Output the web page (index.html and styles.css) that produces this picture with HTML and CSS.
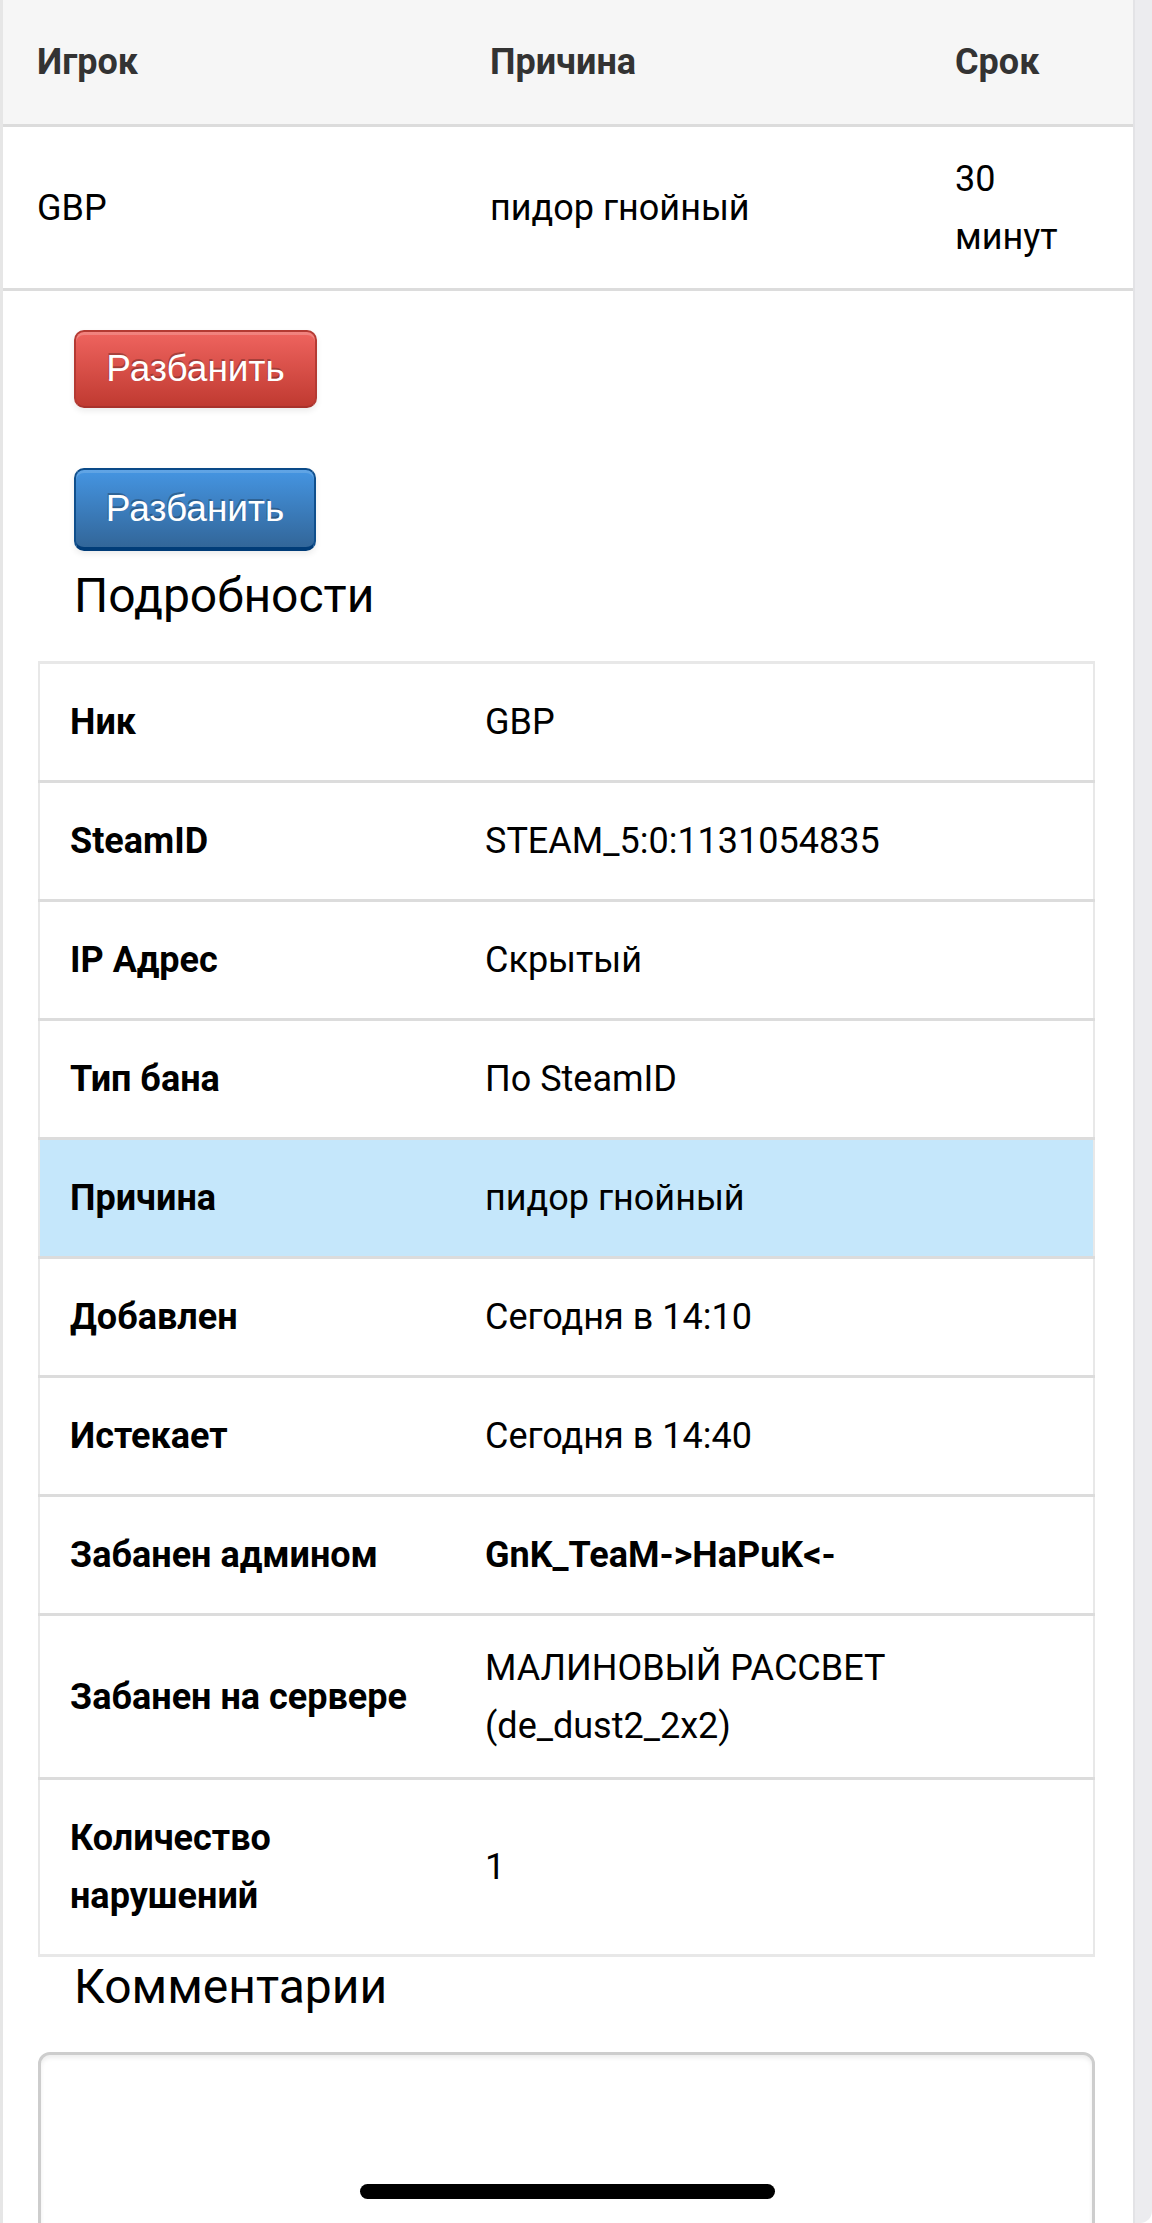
FILE: index.html
```html
<!DOCTYPE html>
<html lang="ru">
<head>
  <meta charset="UTF-8" />
  <meta name="viewport" content="width=device-width, initial-scale=1.0"/>
  <title>Бан GBP</title>
  <link rel="stylesheet" href="styles.css">
</head>
<body>

  <div class="screen">
    <main class="page">

      <table class="bans">
        <colgroup>
          <col class="col-player">
          <col class="col-reason">
          <col class="col-term">
        </colgroup>
        <thead>
          <tr>
            <th>Игрок</th>
            <th>Причина</th>
            <th>Срок</th>
          </tr>
        </thead>
        <tbody>
          <tr>
            <td>GBP</td>
            <td>пидор гнойный</td>
            <td>30 минут</td>
          </tr>
        </tbody>
      </table>

      <div class="ban-panel">
        <div class="actions">
          <button class="btn btn-danger">Разбанить</button>
          <button class="btn btn-primary">Разбанить</button>
        </div>

        <h3 class="section-title">Подробности</h3>
        <table class="details">
          <colgroup>
            <col class="col-label">
            <col>
          </colgroup>
          <tr><th>Ник</th><td>GBP</td></tr>
          <tr><th>SteamID</th><td>STEAM_5:0:1131054835</td></tr>
          <tr><th>IP Адрес</th><td>Скрытый</td></tr>
          <tr><th>Тип бана</th><td>По SteamID</td></tr>
          <tr class="is-reason"><th>Причина</th><td>пидор гнойный</td></tr>
          <tr><th>Добавлен</th><td>Сегодня в 14:10</td></tr>
          <tr><th>Истекает</th><td>Сегодня в 14:40</td></tr>
          <tr><th>Забанен админом</th><td><strong>GnK_TeaM-&gt;HaPuK&lt;-</strong></td></tr>
          <tr class="is-server"><th>Забанен на сервере</th><td>МАЛИНОВЫЙ РАССВЕТ (de_dust2_2x2)</td></tr>
          <tr class="is-last"><th>Количество нарушений</th><td>1</td></tr>
        </table>

        <h3 class="section-title section-title-comments">Комментарии</h3>
        <textarea class="comment-box"></textarea>
      </div>

    </main>
    <div class="scroll-rail"></div>
    <div class="home-indicator"></div>
  </div>

</body>
</html>
```

FILE: styles.css
```css
body {
  margin: 0;
  background-color: #fff;
  font-family: Roboto, "Noto Sans", sans-serif;
  color: #000;
}

.screen {
  position: relative;
  display: flex;
  height: 2223px;
  overflow: hidden;
}

.page {
  flex: none;
  width: 1130px;
  border-left: 3px solid #e6e6e6;
}

.scroll-rail {
  flex: 1;
  background-color: #ececef;
  border-left: 2px solid #e3e3e6;
  border-bottom-right-radius: 12px;
}

/* top list */
.bans {
  width: 100%;
  border-collapse: collapse;
  table-layout: fixed;
  font-size: 36px;
  line-height: 58px;
}

.col-player { width: 453px; }
.col-reason { width: 465px; }
.col-term   { width: 212px; }

.bans th {
  background-color: #f6f6f6;
  color: #333;
  font-weight: 700;
  text-align: left;
  padding: 33px 34px;
  border-bottom: 3px solid #dcdcdc;
}

.bans td {
  padding: 23px 34px 22px;
  border-bottom: 3px solid #dcdcdc;
  vertical-align: middle;
}

/* panel under the row */
.ban-panel {
  padding: 0 38px 0 35px;
}

.actions {
  display: flex;
  flex-direction: column;
  align-items: flex-start;
  gap: 60px;
  padding: 39px 0 0 36px;
}

.btn {
  width: 243px;
  height: 78px;
  padding: 0;
  font-family: "Liberation Sans", Arial, sans-serif;
  font-size: 37px;
  color: #fff;
  border-radius: 10px;
  text-shadow: -1px -2px 0 rgba(0,0,0,0.25);
  cursor: pointer;
}

.btn-danger {
  background: linear-gradient(#ef645f, #c03a31);
  border: 2px solid #b43a33;
  border-bottom-color: #a8322c;
  box-shadow: inset 0 3px 0 rgba(255,255,255,0.2), 0 3px 6px rgba(0,0,0,0.08);
}

.btn-primary {
  width: 242px;
  height: 83px;
  background: linear-gradient(#4595e2, #326699);
  border: 2px solid #104f8c;
  border-top-color: #0a4a88;
  border-bottom: 4px solid #003c78;
  box-shadow: inset 0 3px 0 rgba(255,255,255,0.15), 0 3px 6px rgba(0,0,0,0.08);
}

.section-title {
  margin: 18px 0 39px 36px;
  font-size: 48px;
  font-weight: 400;
  line-height: 53px;
}

.section-title-comments {
  margin-top: 3px;
}

/* details */
.details {
  width: 100%;
  border-collapse: collapse;
  table-layout: fixed;
  border-left: 2px solid #e8e8e8;
  border-right: 2px solid #e8e8e8;
  border-top: 3px solid #e8e8e8;
  font-size: 36px;
  line-height: 58px;
}

.col-label { width: 414px; }

.details th,
.details td {
  padding: 29px 32px 29px 30px;
  border-bottom: 3px solid #dcdcdc;
  text-align: left;
  vertical-align: middle;
}

.details td {
  padding-left: 32px;
}

.details th {
  font-weight: 700;
}

.details strong {
  font-weight: 700;
}

.details .is-reason th,
.details .is-reason td {
  background-color: #c5e7fb;
}

.details .is-server th,
.details .is-server td {
  padding-top: 23px;
  padding-bottom: 22px;
}

.details .is-last th,
.details .is-last td {
  border-bottom-color: #e8e8e8;
}

.comment-box {
  display: block;
  box-sizing: border-box;
  width: 100%;
  height: 320px;
  margin: 0;
  border: 3px solid #cdcdcd;
  border-radius: 12px;
  box-shadow: inset 0 3px 4px rgba(0,0,0,0.07);
  resize: none;
}

.home-indicator {
  position: absolute;
  left: 360px;
  top: 2184px;
  width: 415px;
  height: 15px;
  border-radius: 8px;
  background-color: #000;
}
```
